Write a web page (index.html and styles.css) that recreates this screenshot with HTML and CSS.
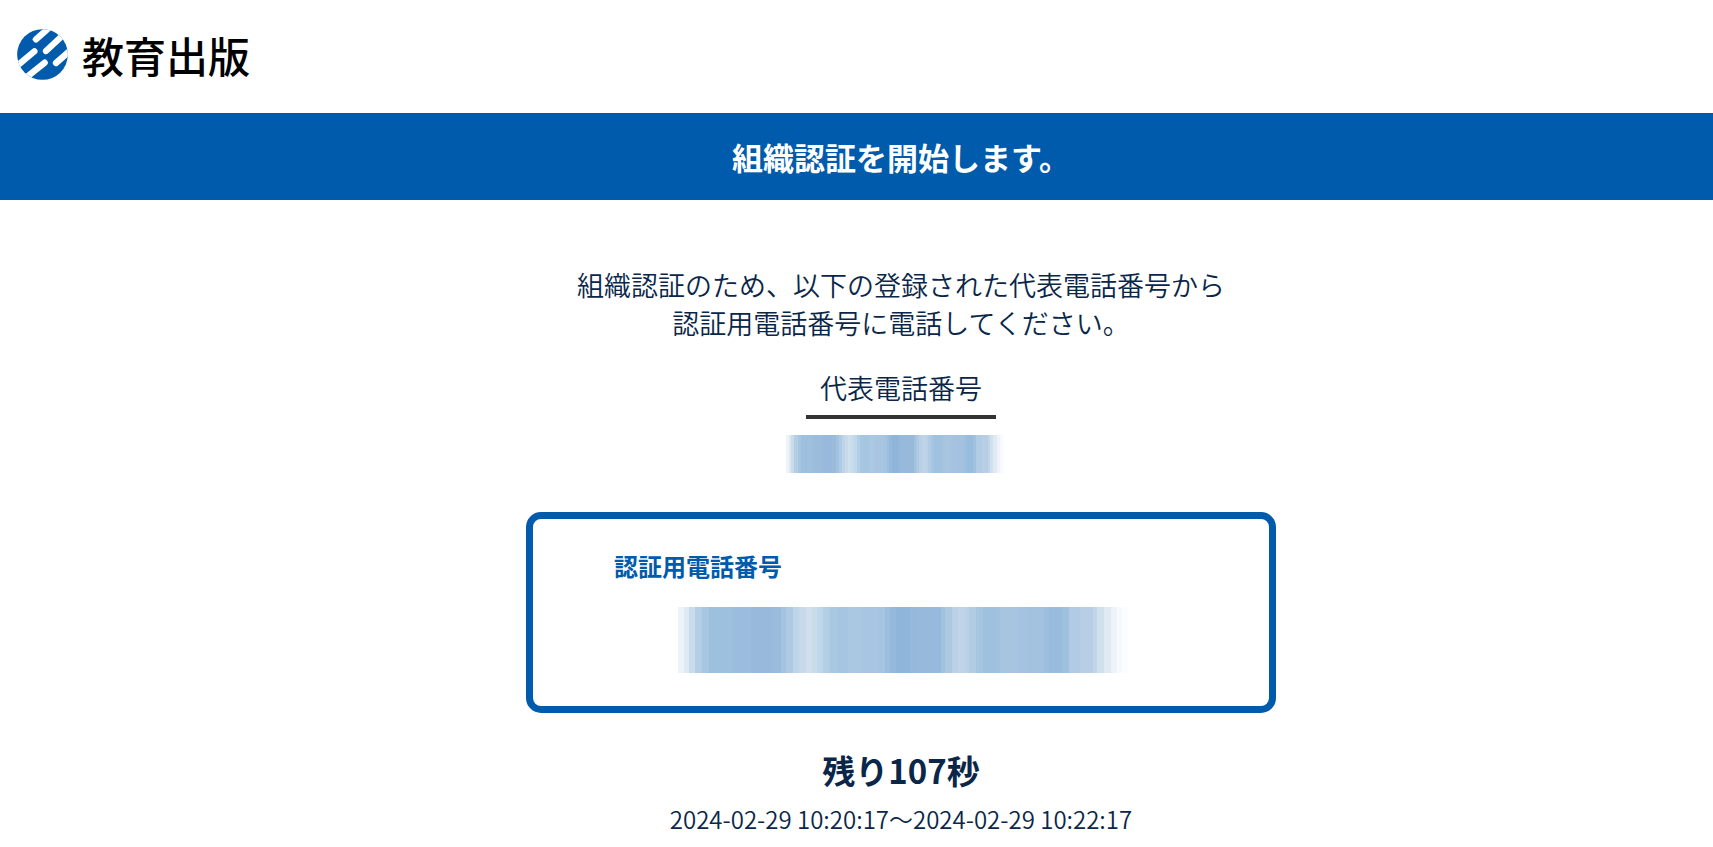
FILE: index.html
```html
<!DOCTYPE html>
<html lang="ja">
<head>
<meta charset="utf-8">
<meta name="viewport" content="width=device-width, initial-scale=1">
<title>組織認証</title>
<link rel="stylesheet" href="styles.css">
</head>
<body>
<header class="site-header">
  <svg class="logo-mark" viewBox="0 0 153 153" aria-hidden="true">
    <defs><clipPath id="disc"><circle cx="76.500" cy="76.500" r="76"/></clipPath></defs>
    <g clip-path="url(#disc)">
      <rect width="153" height="153" fill="#005bac"/>
      <g stroke="#fff" stroke-width="19" stroke-linecap="round">
        <path d="M100 -7L57 31"/>
        <path d="M147 10L87 66"/>
        <path d="M172 54L117 102"/>
        <path d="M-5 115L52 67"/>
        <path d="M22 150L83 101"/>
      </g>
    </g>
  </svg>
  <span class="logo-name">教育出版</span>
</header>
<h1 class="banner">組織認証を開始します。</h1>
<main class="content">
  <p class="lead">組織認証のため、以下の登録された代表電話番号から<br>認証用電話番号に電話してください。</p>
  <h2 class="phone-label">代表電話番号</h2>
  <svg class="mask mask-small" viewBox="0 0 1350 10" preserveAspectRatio="none" role="img" aria-label="代表電話番号（非表示）"><use href="#bands"/></svg>
  <section class="auth-box">
    <h2 class="auth-label">認証用電話番号</h2>
    <svg class="mask mask-large" viewBox="0 0 1350 10" preserveAspectRatio="none" role="img" aria-label="認証用電話番号（非表示）">
      <g id="bands" shape-rendering="crispEdges">
        <path fill="#edf3f9" d="M0 0H1350V10H0z"/><path fill="#dde9f3" d="M18 0H1350V10H18z"/><path fill="#c8dcec" d="M33 0H1350V10H33z"/><path fill="#b4cee5" d="M51 0H1350V10H51z"/><path fill="#a6c6e1" d="M72 0H1350V10H72z"/><path fill="#9dc0df" d="M93 0H1350V10H93z"/><path fill="#9bbcdc" d="M165 0H1350V10H165z"/><path fill="#98b8dc" d="M220 0H1350V10H220z"/><path fill="#9bbbdd" d="M282 0H1350V10H282z"/><path fill="#a3c3e0" d="M309 0H1350V10H309z"/><path fill="#aecae4" d="M324 0H1350V10H324z"/><path fill="#bdd5e9" d="M345 0H1350V10H345z"/><path fill="#c8daea" d="M363 0H1350V10H363z"/><path fill="#cfdfed" d="M384 0H1350V10H384z"/><path fill="#c9dcea" d="M402 0H1350V10H402z"/><path fill="#bfd7ea" d="M417 0H1350V10H417z"/><path fill="#b1cee4" d="M435 0H1350V10H435z"/><path fill="#a8c8e1" d="M456 0H1350V10H456z"/><path fill="#a6c5e0" d="M477 0H1350V10H477z"/><path fill="#abc8e2" d="M510 0H1350V10H510z"/><path fill="#a8c6e1" d="M550 0H1350V10H550z"/><path fill="#a5c4e1" d="M603 0H1350V10H603z"/><path fill="#9dbfde" d="M621 0H1350V10H621z"/><path fill="#95b8dc" d="M636 0H1350V10H636z"/><path fill="#90b5da" d="M654 0H1350V10H654z"/><path fill="#95b9db" d="M695 0H1350V10H695z"/><path fill="#97b9dc" d="M714 0H1350V10H714z"/><path fill="#a0c2df" d="M789 0H1350V10H789z"/><path fill="#adc9e2" d="M801 0H1350V10H801z"/><path fill="#bbd0e7" d="M822 0H1350V10H822z"/><path fill="#c0d4e9" d="M840 0H1350V10H840z"/><path fill="#bcd1e7" d="M861 0H1350V10H861z"/><path fill="#afcce3" d="M873 0H1350V10H873z"/><path fill="#a5c5e1" d="M894 0H1350V10H894z"/><path fill="#9fc1de" d="M915 0H1350V10H915z"/><path fill="#a1c2df" d="M948 0H1350V10H948z"/><path fill="#a7c5e1" d="M966 0H1350V10H966z"/><path fill="#a5c2e0" d="M1020 0H1350V10H1020z"/><path fill="#a2c2df" d="M1043 0H1350V10H1043z"/><path fill="#9cbedf" d="M1098 0H1350V10H1098z"/><path fill="#98bbde" d="M1113 0H1350V10H1113z"/><path fill="#9fc1df" d="M1152 0H1350V10H1152z"/><path fill="#b1cbe4" d="M1173 0H1350V10H1173z"/><path fill="#b7cee6" d="M1206 0H1350V10H1206z"/><path fill="#bfd5e8" d="M1245 0H1350V10H1245z"/><path fill="#d0e0ed" d="M1257 0H1350V10H1257z"/><path fill="#e0eaf4" d="M1278 0H1350V10H1278z"/><path fill="#eef3fa" d="M1299 0H1350V10H1299z"/><path fill="#f7f9fd" d="M1317 0H1350V10H1317z"/><path fill="#fcfdff" d="M1332 0H1350V10H1332z"/>
      </g>
    </svg>
  </section>
  <p class="remaining">残り107秒</p>
  <p class="period">2024-02-29 10:20:17～2024-02-29 10:22:17</p>
</main>
</body>
</html>
```
FILE: styles.css
```css
* {
  box-sizing: border-box;
}

body {
  margin: 0;
  background: #fff;
  color: #0a2749;
  font-family: "Noto Sans CJK JP", sans-serif;
}

h1, h2, p {
  margin: 0;
}

.site-header {
  display: flex;
  align-items: center;
  gap: 14px;
  height: 113px;
  padding: 0 17px 4px;
}

.logo-mark {
  width: 51px;
  height: 51px;
}

.logo-name {
  color: #000;
  font-size: 42px;
  font-weight: 500;
  line-height: 50px;
}

.banner {
  padding: 22px 0 21px 89px;
  background: #005bac;
  color: #fff;
  font-size: 31px;
  font-weight: 700;
  line-height: 44px;
  text-align: center;
}

.content {
  display: flex;
  flex-direction: column;
  align-items: center;
  padding: 66px 0 8px 89px;
}

.lead {
  font-size: 27px;
  font-weight: 350;
  line-height: 38px;
  text-align: center;
}

.phone-label {
  margin-top: 26px;
  padding: 0 14px 8px;
  border-bottom: 4px solid #333;
  font-size: 27px;
  font-weight: 350;
  line-height: 39px;
}

.mask {
  display: block;
}

.mask-small {
  width: 219px;
  height: 38px;
  margin: 16px 12px 0 0;
}

.auth-box {
  display: flex;
  flex-direction: column;
  width: 100%;
  max-width: 750px;
  margin-top: 39px;
  padding: 29px 81px 33px;
  border: 7px solid #005bac;
  border-radius: 15px;
}

.auth-label {
  color: #005bac;
  font-size: 24px;
  font-weight: 700;
  line-height: 36px;
}

.mask-large {
  align-self: center;
  width: 450px;
  height: 66px;
  margin: 23px 0 0 4px;
}

.remaining {
  margin-top: 33px;
  font-size: 33px;
  font-weight: 700;
  line-height: 48px;
}

.period {
  margin-top: 7px;
  font-size: 24px;
  font-weight: 350;
  line-height: 36px;
}
```
